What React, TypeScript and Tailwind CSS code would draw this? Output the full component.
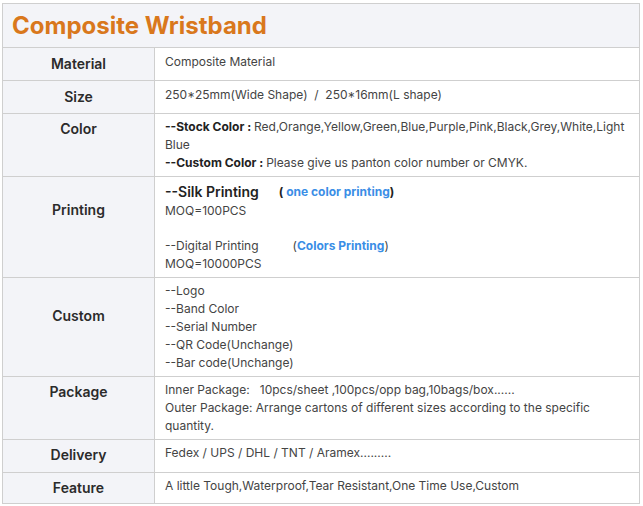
import React from "react";

const font = { fontFamily: "Inter, 'Liberation Sans', sans-serif" };

function Row({
  label,
  h,
  lpt,
  children,
}: {
  label: string;
  h: string;
  lpt: string;
  children: React.ReactNode;
}) {
  return (
    <div className={`flex border-t border-[#cfcfcf] ${h}`}>
      <div
        className={`w-[152px] shrink-0 bg-[#f3f4f8] border-r border-[#cfcfcf] text-center text-[14px] leading-[20px] font-semibold text-[#2b2b2b] ${lpt}`}
      >
        {label}
      </div>
      <div className="flex-1 bg-white pl-[10px] pt-[4px] text-[12px] leading-[18px] text-[#444] whitespace-nowrap">
        {children}
      </div>
    </div>
  );
}

export default function App() {
  return (
    <div className="bg-white w-[643px] h-[506px] pt-[3px] pl-[2px]" style={font}>
      <div className="w-[638px] h-[501px] border border-[#cfcfcf] flex flex-col">
        <div className="h-[43px] bg-[#f3f4f8] pl-[9px] pt-[8px]">
          <span className="text-[24px] leading-[28px] font-bold text-[#d9781c]">Composite Wristband</span>
        </div>
        <Row label="Material" h="h-[33px]" lpt="pt-[6px]">
          <div className="pt-[1px]">Composite Material</div>
        </Row>
        <Row label="Size" h="h-[33px]" lpt="pt-[6px]">
          <div className="pt-[1px] whitespace-pre">250*25mm(Wide Shape)  /  250*16mm(L shape)</div>
        </Row>
        <Row label="Color" h="h-[63px]" lpt="pt-[5px]">
          <div>
            <span className="font-bold text-[#222]">--Stock Color : </span>
            Red,Orange,Yellow,Green,Blue,Purple,Pink,Black,Grey,White,Light
          </div>
          <div>Blue</div>
          <div>
            <span className="font-bold text-[#222]">--Custom Color : </span>
            Please give us panton color number or CMYK.
          </div>
        </Row>
        <Row label="Printing" h="h-[101px]" lpt="pt-[23px]">
          <div className="h-[21px] flex items-center">
            <span className="text-[14px] font-semibold text-[#222]">--Silk Printing</span>
            <span className="ml-[20px] font-bold text-[#222]">
              ( <span className="text-[#3a8ee6]">one color printing</span>)
            </span>
          </div>
          <div className="h-[18px]">MOQ=100PCS</div>
          <div className="h-[17px]"></div>
          <div className="h-[18px] flex">
            <span>--Digital Printing</span>
            <span className="ml-[34px]">
              (<span className="font-bold text-[#3a8ee6]">Colors Printing</span>)
            </span>
          </div>
          <div className="h-[18px]">MOQ=10000PCS</div>
        </Row>
        <Row label="Custom" h="h-[99px]" lpt="pt-[28px]">
          <div>--Logo</div>
          <div>--Band Color</div>
          <div>--Serial Number</div>
          <div>--QR Code(Unchange)</div>
          <div>--Bar code(Unchange)</div>
        </Row>
        <Row label="Package" h="h-[63px]" lpt="pt-[5px]">
          <div className="whitespace-pre">Inner Package:   10pcs/sheet ,100pcs/opp bag,10bags/box......</div>
          <div>Outer Package: Arrange cartons of different sizes according to the specific</div>
          <div>quantity.</div>
        </Row>
        <Row label="Delivery" h="h-[33px]" lpt="pt-[5px]">
          <div>Fedex / UPS / DHL / TNT / Aramex.........</div>
        </Row>
        <Row label="Feature" h="h-[31px]" lpt="pt-[5px]">
          <div>A little Tough,Waterproof,Tear Resistant,One Time Use,Custom</div>
        </Row>
      </div>
    </div>
  );
}
